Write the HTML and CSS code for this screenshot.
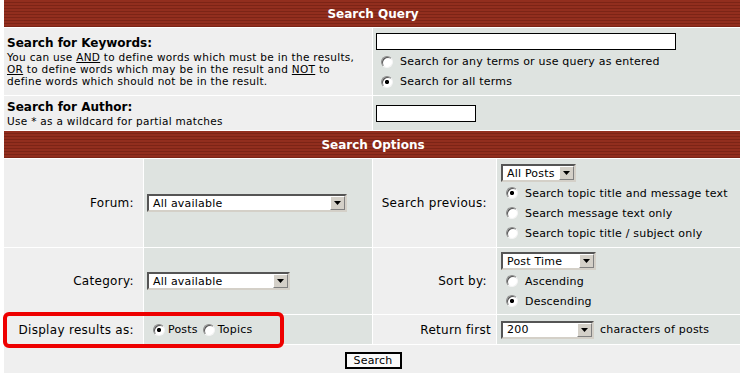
FILE: index.html
```html
<!DOCTYPE html>
<html>
<head>
<meta charset="utf-8">
<title>Search</title>
<link rel="stylesheet" href="styles.css">
</head>
<body>
<div class="page">
<table class="forumline">
  <colgroup><col class="c1"><col class="c2"><col class="c3"><col class="c4"></colgroup>
  <tr class="r-head"><th colspan="4">Search Query</th></tr>
  <tr class="r-kw">
    <td colspan="2" class="row1 desc">
      <div class="title">Search for Keywords:</div>
      <div class="small">You can use <u>AND</u> to define words which must be in the results,<br><u>OR</u> to define words which may be in the result and <u>NOT</u> to<br>define words which should not be in the result.</div>
    </td>
    <td colspan="2" class="row2 val">
      <div class="fline"><input class="textbox w300" type="text"></div>
      <label class="opt"><input class="radio" type="radio" name="terms"><span>Search for any terms or use query as entered</span></label>
      <label class="opt"><input class="radio" type="radio" name="terms" checked><span>Search for all terms</span></label>
    </td>
  </tr>
  <tr class="r-author">
    <td colspan="2" class="row1 desc">
      <div class="title">Search for Author:</div>
      <div class="small">Use * as a wildcard for partial matches</div>
    </td>
    <td colspan="2" class="row2 val">
      <div class="fline"><input class="textbox w100" type="text"></div>
    </td>
  </tr>
  <tr class="r-head"><th colspan="4">Search Options</th></tr>
  <tr class="r-forum">
    <td class="row1 lbl">Forum:&nbsp;</td>
    <td class="row2 val">
      <div class="sel w200"><span class="selv">All available</span><span class="selb"><svg width="7" height="4" viewBox="0 0 7 4"><path d="M0 0h7L3.5 4z" fill="#000"/></svg></span></div>
    </td>
    <td class="row1 lbl">Search previous:&nbsp;</td>
    <td class="row2 val v4">
      <div class="fline"><div class="sel w75"><span class="selv">All Posts</span><span class="selb"><svg width="7" height="4" viewBox="0 0 7 4"><path d="M0 0h7L3.5 4z" fill="#000"/></svg></span></div></div>
      <label class="opt"><input class="radio" type="radio" name="sf" checked><span>Search topic title and message text</span></label>
      <label class="opt"><input class="radio" type="radio" name="sf"><span>Search message text only</span></label>
      <label class="opt"><input class="radio" type="radio" name="sf"><span>Search topic title / subject only</span></label>
    </td>
  </tr>
  <tr class="r-cat">
    <td class="row1 lbl">Category:&nbsp;</td>
    <td class="row2 val">
      <div class="sel w143"><span class="selv">All available</span><span class="selb"><svg width="7" height="4" viewBox="0 0 7 4"><path d="M0 0h7L3.5 4z" fill="#000"/></svg></span></div>
    </td>
    <td class="row1 lbl">Sort by:&nbsp;</td>
    <td class="row2 val v4">
      <div class="fline"><div class="sel w95"><span class="selv">Post Time</span><span class="selb"><svg width="7" height="4" viewBox="0 0 7 4"><path d="M0 0h7L3.5 4z" fill="#000"/></svg></span></div></div>
      <label class="opt"><input class="radio" type="radio" name="sd"><span>Ascending</span></label>
      <label class="opt"><input class="radio" type="radio" name="sd" checked><span>Descending</span></label>
    </td>
  </tr>
  <tr class="r-disp">
    <td class="row1 lbl">Display results as:&nbsp;</td>
    <td class="row2 val">
      <div class="inl"><input class="radio r-in" type="radio" name="sr" checked><span>Posts</span><input class="radio r-in r-in2" type="radio" name="sr"><span>Topics</span></div>
    </td>
    <td class="row1 lbl">Return first</td>
    <td class="row2 val v4">
      <div class="inl"><div class="sel w93"><span class="selv">200</span><span class="selb"><svg width="7" height="4" viewBox="0 0 7 4"><path d="M0 0h7L3.5 4z" fill="#000"/></svg></span></div><span class="after">characters of posts</span></div>
    </td>
  </tr>
  <tr class="r-bottom">
    <td colspan="4" class="cat"><button class="liteoption" type="button">Search</button></td>
  </tr>
</table>
<div class="highlight"></div>
</div>
</body>
</html>
```

FILE: styles.css
```css
html, body {
  margin: 0;
  padding: 0;
  background: #ffffff;
}
body {
  font-family: "DejaVu Sans", Verdana, sans-serif;
  font-size: 11px;
  letter-spacing: 0.2px;
  color: #000;
}
.page {
  position: relative;
  width: 740px;
  height: 373px;
  overflow: hidden;
}
.forumline {
  margin: -1px 0 0 3px;
  border-collapse: separate;
  border-spacing: 1px;
  background: #ffffff;
  table-layout: fixed;
  width: 740px;
}
.c1 { width: 139px; }
.c2 { width: 228px; }
.c3 { width: 123px; }
.c4 { width: 245px; }

.r-head { height: 27px; }
.r-kw { height: 67px; }
.r-author { height: 34px; }
.r-forum { height: 88px; }
.r-cat { height: 66px; }
.r-disp { height: 29px; }
.r-bottom { height: 30px; }

th {
  padding: 0;
  color: #fff;
  font-size: 12px;
  font-weight: bold;
  letter-spacing: 0;
  text-align: center;
  background: repeating-linear-gradient(to bottom, #922e1e 0, #922e1e 2px, #7c2416 2px, #7c2416 3px);
}
td {
  padding: 0 3px;
  vertical-align: middle;
}
.row1 { background: #efefef; }
.row2 { background: #dee3e0; }
.cat { background: #efefef; text-align: center; }

.title {
  font-size: 12px;
  font-weight: bold;
  letter-spacing: 0;
  line-height: 15px;
}
.small {
  font-size: 10.5px;
  letter-spacing: 0.3px;
  line-height: 12px;
}
.lbl {
  text-align: right;
  font-size: 12px;
  letter-spacing: 0.3px;
  padding-right: 5px;
  white-space: nowrap;
}
.v4 { padding-left: 4px; }

.fline {
  height: 20px;
  display: flex;
  align-items: center;
}
.opt {
  height: 20px;
  display: flex;
  align-items: center;
  white-space: nowrap;
}
.radio {
  appearance: none;
  -webkit-appearance: none;
  box-sizing: border-box;
  width: 12px;
  height: 12px;
  margin: 0;
  flex: none;
  border-radius: 50%;
  border: 1px solid;
  border-color: #8a8a8a #f4f4f4 #f4f4f4 #8a8a8a;
  box-shadow: inset 1px 1px 0 #555;
  background: #fff;
}
.radio:checked {
  background: radial-gradient(circle at 50% 50%, #000 0, #000 1.8px, #fff 2.4px);
}
.opt .radio {
  margin-left: 5px;
  margin-right: 7px;
}
.textbox {
  box-sizing: border-box;
  height: 17px;
  margin: 0;
  padding: 0 2px;
  border: 1px solid #000;
  background: #fff;
}
.w300 { width: 300px; }
.w100 { width: 100px; }

.sel {
  box-sizing: border-box;
  display: inline-flex;
  align-items: center;
  height: 18px;
  background: #fff;
  border: 2px solid;
  border-color: #555 #d4d0c8 #d4d0c8 #555;
  vertical-align: middle;
}
.selv {
  flex: 1;
  padding-left: 4px;
  white-space: nowrap;
  overflow: hidden;
}
.selb {
  box-sizing: border-box;
  width: 15px;
  height: 14px;
  display: flex;
  align-items: center;
  justify-content: center;
  background: #d4d0c8;
  border: 1px solid;
  border-color: #fff #808080 #808080 #fff;
}
.w200 { width: 200px; }
.w143 { width: 143px; }
.w75 { width: 75px; }
.w95 { width: 95px; }
.w93 { width: 93px; }

.inl {
  display: flex;
  align-items: center;
  white-space: nowrap;
}
.r-in { margin-left: 6px; margin-right: 3px; }
.r-in2 { margin-left: 5px; }
.after { margin-left: 6px; }

.liteoption {
  box-sizing: border-box;
  width: 57px;
  height: 17px;
  padding: 0;
  font-family: "DejaVu Sans", Verdana, sans-serif;
  font-size: 11px;
  letter-spacing: 0.2px;
  color: #000;
  background: #fafafa;
  border: 2px solid #000;
  vertical-align: middle;
}

.highlight {
  position: absolute;
  left: 3px;
  top: 312px;
  width: 281px;
  height: 36px;
  box-sizing: border-box;
  border: 4px solid #ee0000;
  border-radius: 6px;
}
```
